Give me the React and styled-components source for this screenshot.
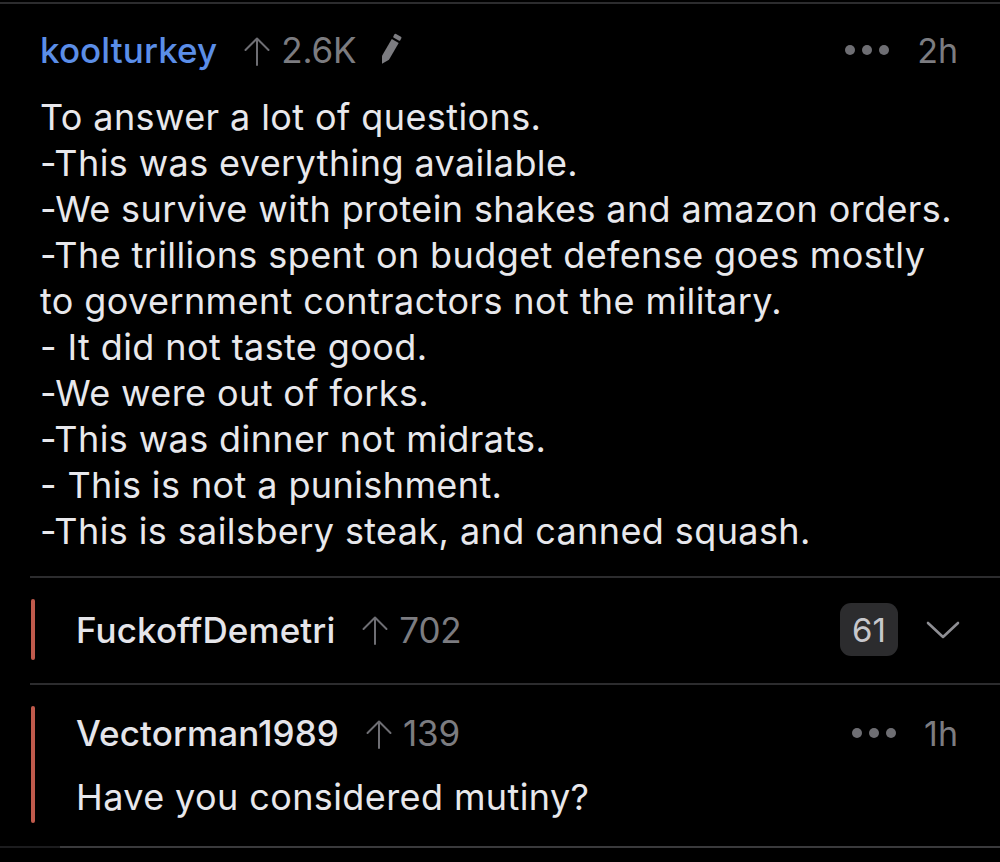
import React from "react";
import styled, { createGlobalStyle } from "styled-components";

const GlobalStyle = createGlobalStyle`
  html, body {
    margin: 0;
    padding: 0;
    background: #000;
  }
  body {
    font-family: Inter, "Noto Sans", "Liberation Sans", sans-serif;
    -webkit-font-smoothing: antialiased;
  }
`;

const UpArrow = () => (
  <svg width="26" height="30" viewBox="0 0 26 30" fill="none">
    <path
      d="M13 29V2.5M1.5 14L13 2.5L24.5 14"
      stroke="#6e6e73"
      strokeWidth="2"
      strokeLinecap="round"
      strokeLinejoin="round"
    />
  </svg>
);

const PencilIcon = () => (
  <svg width="24" height="36" viewBox="0 0 24 36">
    <g transform="rotate(30 12 18)">
      <rect x="8" y="1" width="8" height="4.5" rx="1.2" fill="#7c7c80" />
      <path d="M8 7.5H16V27L12 34L8 27Z" fill="#7c7c80" />
    </g>
  </svg>
);

const ChevronDown = () => (
  <svg width="34" height="20" viewBox="0 0 34 20" fill="none">
    <path
      d="M2 3L17 17L32 3"
      stroke="#8e8e93"
      strokeWidth="2.6"
      strokeLinecap="round"
      strokeLinejoin="round"
    />
  </svg>
);

const App = () => {
  const lines = [
    "To answer a lot of questions.",
    "-This was everything available.",
    "-We survive with protein shakes and amazon orders.",
    "-The trillions spent on budget defense goes mostly",
    "to government contractors not the military.",
    "- It did not taste good.",
    "-We were out of forks.",
    "-This was dinner not midrats.",
    "- This is not a punishment.",
    "-This is sailsbery steak, and canned squash.",
  ];

  return (
    <>
      <GlobalStyle />
      <Page>
        <Comment>
          <Header $h="44px">
            <Author $op>koolturkey</Author>
            <Score>
              <UpArrow />
              <span>2.6K</span>
            </Score>
            <PencilIcon />
            <Spacer />
            <Dots>
              <Dot />
              <Dot />
              <Dot />
            </Dots>
            <Time>2h</Time>
          </Header>
          <Body>
            {lines.map((l, i) => (
              <div key={i}>{l}</div>
            ))}
          </Body>
        </Comment>

        <Reply>
          <ThreadBar />
          <ReplyContent>
            <Header $h="61px">
              <Author>FuckoffDemetri</Author>
              <Score>
                <UpArrow />
                <span>702</span>
              </Score>
              <Spacer />
              <Badge>61</Badge>
              <Chevron>
                <ChevronDown />
              </Chevron>
            </Header>
          </ReplyContent>
        </Reply>

        <Reply>
          <ThreadBar />
          <ReplyContent>
            <Header $h="54px">
              <Author>Vectorman1989</Author>
              <Score>
                <UpArrow />
                <span>139</span>
              </Score>
              <Spacer />
              <Dots>
                <Dot />
                <Dot />
                <Dot />
              </Dots>
              <Time>1h</Time>
            </Header>
            <ReplyText>Have you considered mutiny?</ReplyText>
          </ReplyContent>
        </Reply>
        <BottomLine />
      </Page>
    </>
  );
};

export default App;

const Page = styled.div`
  width: 1000px;
  height: 862px;
  background: #000;
  overflow: hidden;
  padding-top: 2px;
  box-sizing: border-box;
`;

const Comment = styled.div`
  border-top: 2px solid #2c2c2e;
  padding: 24px 42px 22px 40px;
`;

const Header = styled.div`
  display: flex;
  align-items: center;
  height: ${(p) => p.$h};
`;

const Author = styled.span`
  font-size: 35px;
  font-weight: 500;
  letter-spacing: 0.1px;
  color: ${(p) => (p.$op ? "#5b8ee8" : "#e5e5ea")};
  margin-right: 27px;
`;

const Score = styled.span`
  display: flex;
  align-items: center;
  gap: 11px;
  font-size: 35px;
  letter-spacing: -0.2px;
  color: #7c7c80;
  margin-right: 22px;

  svg {
    margin-top: 1px;
  }
`;

const Spacer = styled.div`
  flex: 1;
`;

const Dots = styled.div`
  display: flex;
  gap: 7px;
  margin-right: 28px;
`;

const Dot = styled.span`
  width: 10px;
  height: 10px;
  border-radius: 50%;
  background: #6e6e73;
`;

const Time = styled.span`
  font-size: 34px;
  color: #7c7c80;
`;

const Body = styled.div`
  margin-top: 22px;
  font-size: 36px;
  line-height: 46px;
  color: #e8e8ec;
  letter-spacing: 0.4px;
`;

const Reply = styled.div`
  display: flex;
  margin-left: 30px;
  border-top: 2px solid #2c2c2e;
  padding: 21px 0 23px;
`;

const ThreadBar = styled.div`
  width: 4px;
  margin-left: 1px;
  border-radius: 2px;
  background: #c05a4c;
  flex-shrink: 0;
`;

const ReplyContent = styled.div`
  flex: 1;
  margin-left: 41px;
  padding-right: 42px;
  display: flex;
  flex-direction: column;
`;

const Badge = styled.span`
  display: flex;
  align-items: center;
  justify-content: center;
  width: 58px;
  height: 53px;
  border-radius: 11px;
  background: #2c2c2e;
  color: #c7c7cc;
  font-size: 33px;
  margin-right: 28px;
`;

const Chevron = styled.span`
  display: flex;
  margin-right: -2px;
`;

const ReplyText = styled.div`
  margin-top: 14px;
  margin-bottom: 3px;
  font-size: 36px;
  line-height: 46px;
  letter-spacing: 0.4px;
  color: #e8e8ec;
`;

const BottomLine = styled.div`
  height: 2px;
  background: linear-gradient(to right, #1c1c1e 60px, #3a3a3c 60px);
`;
